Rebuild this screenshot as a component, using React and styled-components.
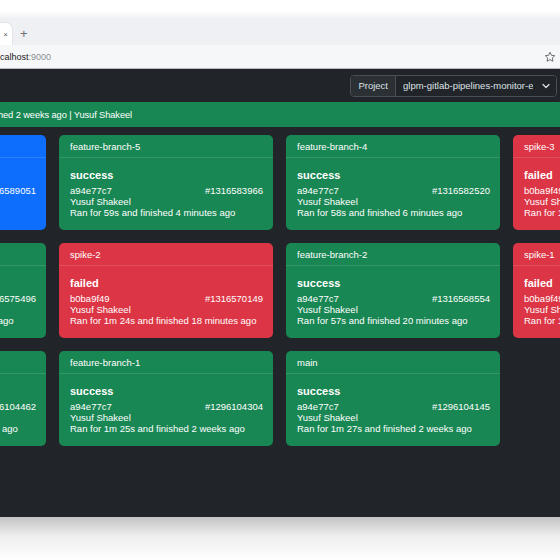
import styled, { createGlobalStyle } from 'styled-components'

const GlobalStyle = createGlobalStyle`
    html, body {
        margin: 0;
        padding: 0;
        background: #ffffff;
        overflow: hidden;
    }
    body {
        font-family: "Liberation Sans", Arial, Helvetica, sans-serif;
    }
`;

const STATUS_COLORS = {
    success: '#198754',
    failed: '#dc3545',
    running: '#0d6efd',
};

const pipelines = [
    { branch: 'feature-branch-6', status: 'running', commit: 'a94e77c7', id: '#1316589051', author: 'Yusuf Shakeel', info: 'Running for 41s' },
    { branch: 'feature-branch-5', status: 'success', commit: 'a94e77c7', id: '#1316583966', author: 'Yusuf Shakeel', info: 'Ran for 59s and finished 4 minutes ago' },
    { branch: 'feature-branch-4', status: 'success', commit: 'a94e77c7', id: '#1316582520', author: 'Yusuf Shakeel', info: 'Ran for 58s and finished 6 minutes ago' },
    { branch: 'spike-3', status: 'failed', commit: 'b0ba9f49', id: '#1316579012', author: 'Yusuf Shakeel', info: 'Ran for 1m 21s and finished 9 minutes ago' },
    { branch: 'feature-branch-3', status: 'success', commit: 'a94e77c7', id: '#1316575496', author: 'Yusuf Shakeel', info: 'Ran for 59s and finished 19 minutes ago' },
    { branch: 'spike-2', status: 'failed', commit: 'b0ba9f49', id: '#1316570149', author: 'Yusuf Shakeel', info: 'Ran for 1m 24s and finished 18 minutes ago' },
    { branch: 'feature-branch-2', status: 'success', commit: 'a94e77c7', id: '#1316568554', author: 'Yusuf Shakeel', info: 'Ran for 57s and finished 20 minutes ago' },
    { branch: 'spike-1', status: 'failed', commit: 'b0ba9f49', id: '#1316566210', author: 'Yusuf Shakeel', info: 'Ran for 1m 19s and finished 22 minutes ago' },
    { branch: 'develop', status: 'success', commit: 'a94e77c7', id: '#1296104462', author: 'Yusuf Shakeel', info: 'Ran for 1m 23s and finished 2 weeks ago' },
    { branch: 'feature-branch-1', status: 'success', commit: 'a94e77c7', id: '#1296104304', author: 'Yusuf Shakeel', info: 'Ran for 1m 25s and finished 2 weeks ago' },
    { branch: 'main', status: 'success', commit: 'a94e77c7', id: '#1296104145', author: 'Yusuf Shakeel', info: 'Ran for 1m 27s and finished 2 weeks ago' },
];

const Screen = styled.div`
    width: 560px;
    height: 560px;
    overflow: hidden;
    display: flex;
    flex-direction: column;
`;

/* ---------- browser chrome ---------- */

const TitleBar = styled.div`
    height: 20px;
    flex: none;
    background: linear-gradient(to bottom, #ffffff 55%, #eceef1);
`;

const TabStrip = styled.div`
    height: 25px;
    flex: none;
    display: flex;
    align-items: flex-end;
    background: #eef0f3;
`;

const Tab = styled.div`
    width: 12px;
    height: 22px;
    background: #ffffff;
    border-radius: 0 6px 0 0;
    box-shadow: 0 0 0 0.5px #d6d8db;
    display: flex;
    align-items: center;
    justify-content: flex-end;
    padding-right: 4px;
    box-sizing: border-box;
    font-size: 8px;
    color: #5f6368;
`;

const NewTab = styled.div`
    align-self: center;
    margin: 2px 0 0 8px;
    font-size: 13px;
    line-height: 1;
    color: #6b6f74;
`;

const AddressRow = styled.div`
    height: 23px;
    flex: none;
    display: flex;
    align-items: center;
    justify-content: space-between;
    padding-right: 4px;
    background: #f6f7f8;
    border-bottom: 1px solid #b9bbbe;
    font-size: 9px;
`;

const Host = styled.span`
    color: #202124;
`;

const Port = styled.span`
    color: #8a8e93;
`;

/* ---------- app ---------- */

const AppArea = styled.div`
    height: 448px;
    flex: none;
    background: #212529;
    overflow: hidden;
    display: flex;
    flex-direction: column;
`;

const WindowShadow = styled.div`
    flex: 1;
    background: linear-gradient(to bottom, #c4c4c4, #eeeeee 45%, #ffffff);
`;

const Navbar = styled.div`
    height: 33px;
    flex: none;
    display: flex;
    justify-content: flex-end;
    align-items: center;
    padding-right: 3px;
`;

const InputGroup = styled.div`
    display: flex;
    height: 22px;
    border: 1px solid #495057;
    border-radius: 4px;
    overflow: hidden;
    font-size: 9.5px;
    color: #dee2e6;
    box-sizing: border-box;
`;

const GroupLabel = styled.div`
    display: flex;
    align-items: center;
    padding: 0 7px;
    background: #2b3035;
    border-right: 1px solid #495057;
`;

const Select = styled.div`
    width: 160px;
    display: flex;
    align-items: center;
    padding: 0 6px 0 7px;
    box-sizing: border-box;
    background: #212529;
    gap: 9px;
`;

const SelectText = styled.span`
    flex: 1;
    overflow: hidden;
    white-space: nowrap;
`;

const Banner = styled.div`
    height: 25px;
    flex: none;
    display: flex;
    align-items: center;
    background: #198754;
    color: #ffffff;
    font-size: 9.3px;
    letter-spacing: -0.1px;
`;

const BannerClip = styled.div`
    width: 132px;
    display: flex;
    justify-content: flex-end;
    white-space: nowrap;
`;

const Grid = styled.div`
    margin: 8px 0 0 -168px;
    display: grid;
    grid-template-columns: repeat(4, 214px);
    grid-auto-rows: 95px;
    gap: 13px;
`;

const Card = styled.div`
    background: ${p => STATUS_COLORS[p.$status]};
    border-radius: 5px;
    color: #ffffff;
    display: flex;
    flex-direction: column;
    overflow: hidden;
`;

const CardHeader = styled.div`
    height: 23px;
    flex: none;
    display: flex;
    align-items: center;
    padding: 0 11px;
    border-bottom: 1px solid rgba(255, 255, 255, 0.13);
    font-size: 9.5px;
    box-sizing: border-box;
`;

const CardBody = styled.div`
    padding: 10px 10px 0 11px;
    font-size: 9.5px;
    line-height: 11px;
`;

const StatusTitle = styled.div`
    font-size: 11px;
    font-weight: bold;
    line-height: 14px;
    margin-bottom: 3px;
`;

const Line = styled.div`
    display: flex;
    justify-content: space-between;
    white-space: nowrap;
`;

const Star = () => (
    <svg width="12" height="12" viewBox="0 0 24 24" fill="none" stroke="#5f6368" strokeWidth="1.8" strokeLinejoin="round">
        <path d="M12 2.5l2.9 6.1 6.6.8-4.9 4.5 1.3 6.6L12 17.2l-5.9 3.3 1.3-6.6-4.9-4.5 6.6-.8z" />
    </svg>
);

const Chevron = () => (
    <svg width="8" height="6" viewBox="0 0 8 6" fill="none" stroke="#dee2e6" strokeWidth="1.2" strokeLinecap="round" strokeLinejoin="round">
        <path d="M1 1.5l3 3 3-3" />
    </svg>
);

const PipelineCard = ({ p }) => (
    <Card $status={p.status}>
        <CardHeader>{p.branch}</CardHeader>
        <CardBody>
            <StatusTitle>{p.status}</StatusTitle>
            <Line>
                <span>{p.commit}</span>
                <span>{p.id}</span>
            </Line>
            <Line>{p.author}</Line>
            <Line>{p.info}</Line>
        </CardBody>
    </Card>
);

const App = () => {
    return (
        <>
            <GlobalStyle />
            <Screen>
                <TitleBar />
                <TabStrip>
                    <Tab>×</Tab>
                    <NewTab>+</NewTab>
                </TabStrip>
                <AddressRow>
                    <span>
                        <Host>calhost</Host>
                        <Port>:9000</Port>
                    </span>
                    <Star />
                </AddressRow>
                <AppArea>
                    <Navbar>
                        <InputGroup>
                            <GroupLabel>Project</GroupLabel>
                            <Select>
                                <SelectText>glpm-gitlab-pipelines-monitor-e</SelectText>
                                <Chevron />
                            </Select>
                        </InputGroup>
                    </Navbar>
                    <Banner>
                        <BannerClip>
                            <span>main: success | Ran for 1m 27s and finished 2 weeks ago | Yusuf Shakeel</span>
                        </BannerClip>
                    </Banner>
                    <Grid>
                        {pipelines.map(p => (
                            <PipelineCard key={p.id} p={p} />
                        ))}
                    </Grid>
                </AppArea>
                <WindowShadow />
            </Screen>
        </>
    )
}

export default App;
